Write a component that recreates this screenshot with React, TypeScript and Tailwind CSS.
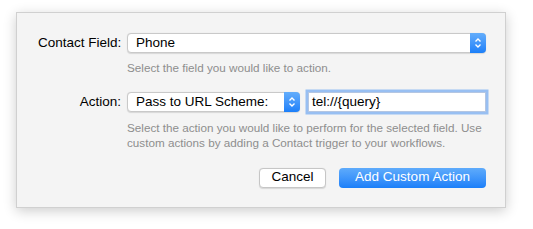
import React from "react";

function Stepper() {
  return (
    <div className="flex h-full w-[16px] items-center justify-center rounded-r-[4px] bg-gradient-to-b from-[#63adfb] to-[#1a7ff9]">
      <svg width="8" height="12" viewBox="0 0 8 12" fill="none">
        <path d="M1.5 4.5 L4 2 L6.5 4.5" stroke="white" strokeWidth="1.4" />
        <path d="M1.5 7.5 L4 10 L6.5 7.5" stroke="white" strokeWidth="1.4" />
      </svg>
    </div>
  );
}

function Popup({ label, className }: { label: string; className: string }) {
  return (
    <div
      className={`flex h-[20px] items-stretch rounded-[4px] border border-[#c9c9c9] bg-white shadow-[0_0.5px_1px_rgba(0,0,0,0.12)] ${className}`}
    >
      <div className="flex flex-1 items-center pl-[8px] text-[13.5px] text-black">{label}</div>
      <div className="-my-px -mr-px">
        <Stepper />
      </div>
    </div>
  );
}

export default function App() {
  return (
    <div
      className="h-[229px] w-[533px] bg-white pl-[16px] pt-[12px]"
      style={{ fontFamily: '"Liberation Sans", Arial, sans-serif' }}
    >
      <div className="flex h-[196px] w-[490px] flex-col border border-[#d0d0d0] bg-[#f4f4f4] pl-[21px] pr-[19px] pt-[20px] shadow-[0_3px_12px_rgba(0,0,0,0.2)]">
        <div className="flex items-center">
          <div className="w-[83px] whitespace-nowrap text-right text-[13.5px] text-black">Contact Field:</div>
          <Popup label="Phone" className="ml-[6px] w-[359px]" />
        </div>
        <div className="ml-[89px] mt-[8px] text-[11.7px] leading-[14px] text-[#8e8e8e]">
          Select the field you would like to action.
        </div>

        <div className="mt-[17px] flex items-center">
          <div className="w-[83px] text-right text-[13.5px] text-black">Action:</div>
          <Popup label="Pass to URL Scheme:" className="ml-[6px] w-[173px]" />
          <div className="ml-[8px] flex h-[20px] w-[178px] items-center border border-[#b4c6e2] bg-white pl-[3px] text-[13.5px] text-black ring-[2.5px] ring-[#98bff2]">
            tel://{"{query}"}
          </div>
        </div>
        <div className="ml-[89px] mt-[7px] whitespace-nowrap text-[11.7px] leading-[15px] text-[#8e8e8e]">
          Select the action you would like to perform for the selected field. Use
          <br />
          custom actions by adding a Contact trigger to your workflows.
        </div>

        <div className="mt-[18px] flex justify-end gap-[13px]">
          <div className="flex h-[20px] w-[67px] items-center justify-center rounded-[4px] border border-[#c6c6c6] bg-white text-[13.5px] text-black shadow-[0_0.5px_1px_rgba(0,0,0,0.12)]">
            Cancel
          </div>
          <div className="flex h-[20px] w-[147px] items-center justify-center rounded-[4px] bg-gradient-to-b from-[#5eabfb] to-[#1a7ff9] text-[13.5px] text-white">
            Add Custom Action
          </div>
        </div>
      </div>
    </div>
  );
}
